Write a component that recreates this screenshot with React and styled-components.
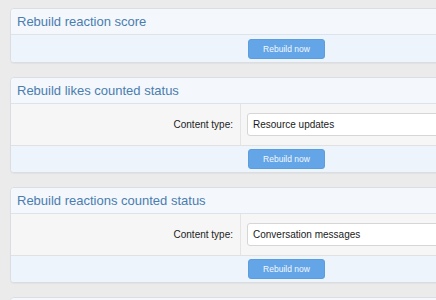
import React from "react";
import styled, { createGlobalStyle } from "styled-components";

const Global = createGlobalStyle`
  html, body {
    margin: 0;
    padding: 0;
    background: #ebebeb;
    overflow: hidden;
  }
  body {
    font-family: "Liberation Sans", Arial, sans-serif;
  }
`;

const Page = styled.div`
  padding: 8px 0 0 10px;
  display: flex;
  flex-direction: column;
  gap: 14px;
`;

const Block = styled.section`
  width: 480px;
  background: #f5f5f5;
  border: 1px solid #dadee3;
  border-radius: 4px;
  overflow: hidden;
  box-shadow: 0 1px 1px rgba(0, 0, 0, 0.04);
`;

const Header = styled.h2`
  margin: 0;
  height: 25px;
  padding: 0 0 0 6px;
  display: flex;
  align-items: center;
  background: #f4f7fb;
  border-bottom: 1px solid #dde3ea;
  color: #4a7db0;
  font-size: 13px;
  font-weight: normal;
`;

const Row = styled.div`
  display: grid;
  grid-template-columns: 230px 1fr;
  height: 41px;
  border-bottom: 1px solid #e1e1e1;
  background: #f6f6f6;
`;

const Label = styled.div`
  display: flex;
  align-items: center;
  justify-content: flex-end;
  padding-right: 7px;
  border-right: 1px solid #e4e4e4;
  font-size: 10px;
  color: #222;
`;

const Field = styled.div`
  display: flex;
  align-items: center;
  padding-left: 6px;
`;

const Input = styled.div`
  flex: 1;
  height: 21px;
  display: flex;
  align-items: center;
  padding-left: 5px;
  background: #fff;
  border: 1px solid #d6d6d6;
  border-radius: 3px;
  font-size: 10px;
  color: #1a1a1a;
`;

const Footer = styled.div`
  display: grid;
  grid-template-columns: 237px 1fr;
  align-items: center;
  height: ${(p) => p.h}px;
  background: #edf4fc;
`;

const Button = styled.button`
  grid-column: 2;
  width: 77px;
  height: 20px;
  padding: 0;
  background: #63a5e6;
  border: 1px solid #5c9ddd;
  border-radius: 3px;
  color: #f4f8fd;
  font-family: "Liberation Sans", Arial, sans-serif;
  font-size: 8.5px;
`;

const Tool = ({ title, label, value }) => (
  <Block>
    <Header>{title}</Header>
    {label && (
      <Row>
        <Label>{label}</Label>
        <Field>
          <Input>{value}</Input>
        </Field>
      </Row>
    )}
    <Footer h={label ? 26 : 27}>
      <Button>Rebuild now</Button>
    </Footer>
  </Block>
);

export default function App() {
  return (
    <>
      <Global />
      <Page>
        <Tool title="Rebuild reaction score" />
        <Tool
          title="Rebuild likes counted status"
          label="Content type:"
          value="Resource updates"
        />
        <Tool
          title="Rebuild reactions counted status"
          label="Content type:"
          value="Conversation messages"
        />
        <Block>
          <Header>&nbsp;</Header>
        </Block>
      </Page>
    </>
  );
}
